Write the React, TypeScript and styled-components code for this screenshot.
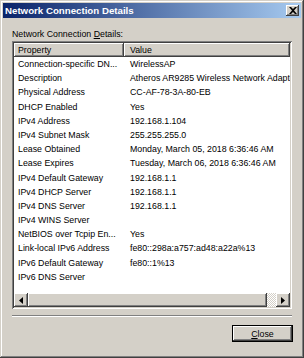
import React from 'react';
import styled, { createGlobalStyle } from 'styled-components';

const GlobalStyle = createGlobalStyle`
  html, body {
    margin: 0;
    padding: 0;
    background: #d4d0c8;
  }
  body {
    font-family: "Liberation Sans", Arial, sans-serif;
    font-size: 8.8px;
    color: #000;
  }
`;

const raised = `
  box-shadow: inset -1px -1px #404040, inset 1px 1px #ffffff,
    inset -2px -2px #808080, inset 2px 2px #d4d0c8;
`;

const Window = styled.div`
  width: 304px;
  height: 358px;
  box-sizing: border-box;
  padding: 3px;
  background: #d4d0c8;
  display: flex;
  flex-direction: column;
  box-shadow: inset -1px -1px #404040, inset 1px 1px #d4d0c8,
    inset -2px -2px #808080, inset 2px 2px #ffffff;
`;

const TitleBar = styled.div`
  height: 15px;
  display: flex;
  align-items: center;
  justify-content: space-between;
  padding: 0 2px;
  background: linear-gradient(to right, #0a246a, #a6caf0);
`;

const Title = styled.span`
  color: #fff;
  font-weight: bold;
  font-size: 9.7px;
  white-space: nowrap;
`;

const TitleButton = styled.div`
  width: 13px;
  height: 11px;
  background: #d4d0c8;
  display: flex;
  align-items: center;
  justify-content: center;
  ${raised}
`;

const Body = styled.div`
  flex: 1;
  display: flex;
  flex-direction: column;
  padding: 0 9px;
`;

const Label = styled.div`
  margin-top: 10px;
  margin-bottom: 1px;
  line-height: 12px;
  height: 12px;
`;

const Mnemonic = styled.span`
  text-decoration: underline;
`;

const ListView = styled.div`
  height: 268px;
  box-sizing: border-box;
  padding: 2px;
  background: #fff;
  display: flex;
  flex-direction: column;
  box-shadow: inset 1px 1px #808080, inset -1px -1px #ffffff,
    inset 2px 2px #404040, inset -2px -2px #d4d0c8;
`;

const Columns = styled.div`
  display: grid;
  grid-template-columns: 110px 1fr;
`;

const HeaderRow = styled(Columns)`
  height: 14px;
  background: #d4d0c8;
`;

const HeaderCell = styled.div<{ $first?: boolean }>`
  line-height: 14px;
  padding-left: ${({ $first }) => ($first ? '4px' : '6px')};
  white-space: nowrap;
  box-shadow: inset -1px -1px #404040, inset 1px 1px #ffffff,
    inset -2px -2px #808080;
`;

const Rows = styled.div`
  flex: 1;
  overflow: hidden;
`;

const Row = styled(Columns)`
  height: 14.2px;
  line-height: 14.2px;
`;

const Cell = styled.div<{ $first?: boolean }>`
  padding-left: ${({ $first }) => ($first ? '4px' : '6px')};
  white-space: nowrap;
  overflow: hidden;
`;

const ScrollBar = styled.div`
  height: 14px;
  display: flex;
  background-color: #ffffff;
  background-image: linear-gradient(45deg, #d4d0c8 25%, transparent 25%, transparent 75%, #d4d0c8 75%),
    linear-gradient(45deg, #d4d0c8 25%, transparent 25%, transparent 75%, #d4d0c8 75%);
  background-size: 2px 2px;
  background-position: 0 0, 1px 1px;
`;

const ScrollButton = styled.div`
  width: 14px;
  height: 14px;
  background: #d4d0c8;
  display: flex;
  align-items: center;
  justify-content: center;
  ${raised}
`;

const Thumb = styled.div<{ $width: number }>`
  width: ${({ $width }) => $width}px;
  background: #d4d0c8;
  ${raised}
`;

const Track = styled.div`
  flex: 1;
`;

const Separator = styled.div`
  margin-top: 6px;
  border-top: 1px solid #808080;
  border-bottom: 1px solid #ffffff;
`;

const Footer = styled.div`
  display: flex;
  justify-content: flex-end;
  margin-top: 8px;
  margin-right: -1px;
`;

const PushButton = styled.button`
  width: 61px;
  height: 17px;
  padding: 0;
  border: 1px solid #000;
  background: #d4d0c8;
  font-family: "Liberation Sans", Arial, sans-serif;
  font-size: 8.8px;
  color: #000;
  box-shadow: inset -1px -1px #404040, inset 1px 1px #ffffff,
    inset -2px -2px #808080;
`;

const rows: [string, string][] = [
  ['Connection-specific DN...', 'WirelessAP'],
  ['Description', 'Atheros AR9285 Wireless Network Adapter'],
  ['Physical Address', 'CC-AF-78-3A-80-EB'],
  ['DHCP Enabled', 'Yes'],
  ['IPv4 Address', '192.168.1.104'],
  ['IPv4 Subnet Mask', '255.255.255.0'],
  ['Lease Obtained', 'Monday, March 05, 2018 6:36:46 AM'],
  ['Lease Expires', 'Tuesday, March 06, 2018 6:36:46 AM'],
  ['IPv4 Default Gateway', '192.168.1.1'],
  ['IPv4 DHCP Server', '192.168.1.1'],
  ['IPv4 DNS Server', '192.168.1.1'],
  ['IPv4 WINS Server', ''],
  ['NetBIOS over Tcpip En...', 'Yes'],
  ['Link-local IPv6 Address', 'fe80::298a:a757:ad48:a22a%13'],
  ['IPv6 Default Gateway', 'fe80::1%13'],
  ['IPv6 DNS Server', ''],
];

export default function App() {
  return (
    <>
      <GlobalStyle />
      <Window>
        <TitleBar>
          <Title>Network Connection Details</Title>
          <TitleButton>
            <svg width="8" height="7" viewBox="0 0 8 7">
              <path d="M0 0h2l2 2 2-2h2L5 3.5 8 7H6L4 5 2 7H0l3-3.5z" fill="#000" />
            </svg>
          </TitleButton>
        </TitleBar>
        <Body>
          <Label>
            Network Connection <Mnemonic>D</Mnemonic>etails:
          </Label>
          <ListView>
            <HeaderRow>
              <HeaderCell $first>Property</HeaderCell>
              <HeaderCell>Value</HeaderCell>
            </HeaderRow>
            <Rows>
              {rows.map(([prop, value]) => (
                <Row key={prop}>
                  <Cell $first>{prop}</Cell>
                  <Cell>{value}</Cell>
                </Row>
              ))}
            </Rows>
            <ScrollBar>
              <ScrollButton>
                <svg width="4" height="7" viewBox="0 0 4 7">
                  <path d="M4 0v7L0 3.5z" fill="#000" />
                </svg>
              </ScrollButton>
              <Thumb $width={239} />
              <Track />
              <ScrollButton>
                <svg width="4" height="7" viewBox="0 0 4 7">
                  <path d="M0 0v7l4-3.5z" fill="#000" />
                </svg>
              </ScrollButton>
            </ScrollBar>
          </ListView>
          <Separator />
          <Footer>
            <PushButton>
              <Mnemonic>C</Mnemonic>lose
            </PushButton>
          </Footer>
        </Body>
      </Window>
    </>
  );
}
